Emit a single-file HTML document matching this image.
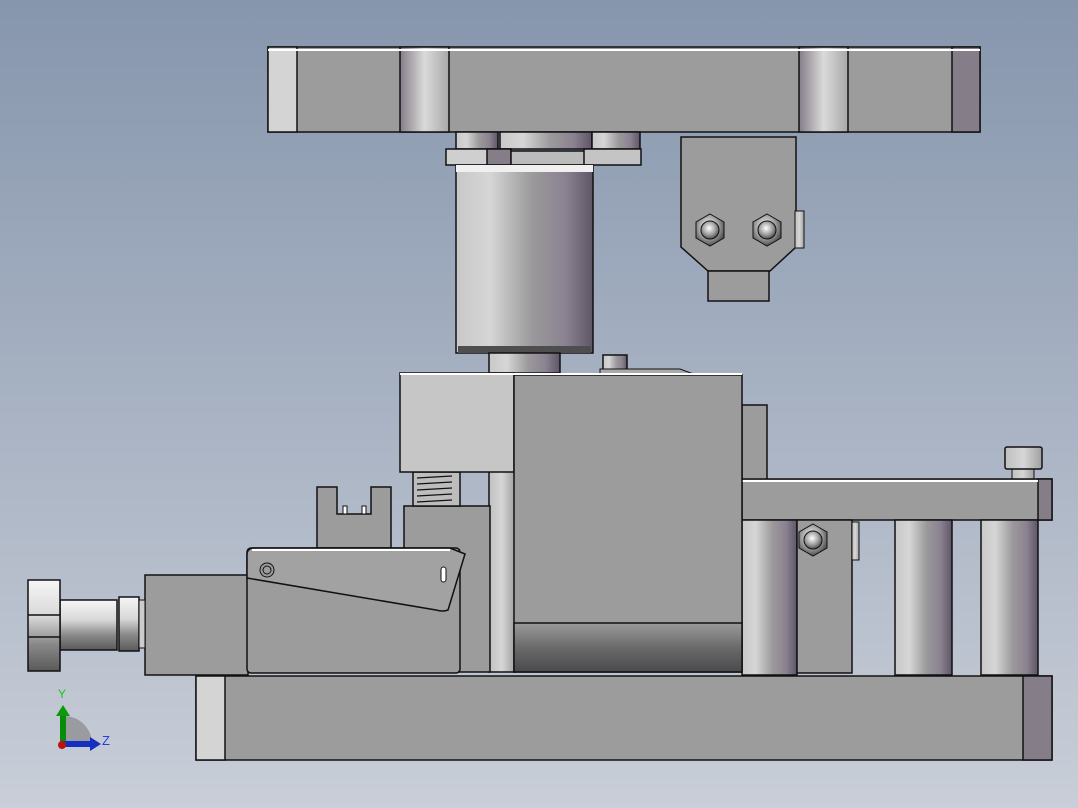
<!DOCTYPE html>
<html><head><meta charset="utf-8"><style>
html,body{margin:0;padding:0;width:1078px;height:808px;overflow:hidden}
svg{display:block}
</style></head><body>
<svg width="1078" height="808" viewBox="0 0 1078 808" xmlns="http://www.w3.org/2000/svg">
<defs>
<linearGradient id="bg" x1="0" y1="0" x2="0" y2="1"><stop offset="0" stop-color="#8696ad"/><stop offset="1" stop-color="#c9ced8"/></linearGradient>
<linearGradient id="cyl" x1="0" y1="0" x2="1" y2="0"><stop offset="0" stop-color="#c8c8c8"/><stop offset="0.25" stop-color="#d6d6d6"/><stop offset="0.55" stop-color="#9c9a9c"/><stop offset="0.8" stop-color="#8a8290"/><stop offset="1" stop-color="#5e5666"/></linearGradient>
<linearGradient id="slot" x1="0" y1="0" x2="1" y2="0"><stop offset="0" stop-color="#857d88"/><stop offset="0.5" stop-color="#dadada"/><stop offset="1" stop-color="#a8a8a8"/></linearGradient>
<linearGradient id="shaft" x1="0" y1="0" x2="0" y2="1"><stop offset="0" stop-color="#f6f6f6"/><stop offset="0.4" stop-color="#d8d8d8"/><stop offset="0.7" stop-color="#8a8a8a"/><stop offset="1" stop-color="#5a5a5a"/></linearGradient>
<linearGradient id="dark" x1="0" y1="0" x2="0" y2="1"><stop offset="0" stop-color="#9a9a9a"/><stop offset="0.5" stop-color="#6a6a6a"/><stop offset="1" stop-color="#4a4a4e"/></linearGradient>
<linearGradient id="rod" x1="0" y1="0" x2="1" y2="0"><stop offset="0" stop-color="#c0c0c0"/><stop offset="0.5" stop-color="#d6d6d6"/><stop offset="1" stop-color="#a0a0a0"/></linearGradient>
<radialGradient id="nut" cx="0.45" cy="0.4" r="0.6"><stop offset="0" stop-color="#ffffff"/><stop offset="0.6" stop-color="#a0a0a0"/><stop offset="1" stop-color="#505050"/></radialGradient>
</defs>
<rect width="1078" height="808" fill="url(#bg)"/>
<g stroke="#111" stroke-width="1.5">
<!-- top plate -->
<rect x="268" y="47" width="712" height="85" fill="#9c9c9c"/>
<rect x="268" y="47" width="29" height="85" fill="#d4d4d4"/>
<rect x="952" y="47" width="28" height="85" fill="#857d88"/>
<rect x="400" y="47" width="49" height="85" fill="url(#slot)"/>
<rect x="799" y="47" width="49" height="85" fill="url(#slot)"/>
<line x1="268" y1="50" x2="980" y2="50" stroke="#fff" stroke-width="2"/>
<!-- stubs and flange -->
<rect x="456" y="132" width="42" height="17" fill="url(#cyl)"/>
<rect x="500" y="132" width="92" height="17" fill="url(#cyl)"/>
<rect x="592" y="132" width="48" height="17" fill="url(#cyl)"/>
<rect x="446" y="149" width="65" height="16" fill="#cfcfcf"/>
<rect x="487" y="149" width="24" height="16" fill="#857d88"/>
<rect x="511" y="151" width="75" height="14" fill="#bbb"/>
<rect x="584" y="149" width="57" height="16" fill="#c4c4c4"/>
<!-- cylinder -->
<rect x="456" y="165" width="137" height="188" fill="url(#cyl)"/>
<rect x="456" y="165" width="137" height="7" fill="#f0f0f0" stroke="none"/>
<rect x="458" y="346" width="133" height="7" fill="#4e4e4e" stroke="none"/>
<rect x="489" y="353" width="71" height="20" fill="url(#cyl)"/>
<rect x="603" y="355" width="24" height="18" fill="url(#cyl)"/>
<path d="M600 373 L600 369 L680 369 L696 375" fill="#aaa" stroke-width="1"/>
<!-- bracket -->
<path d="M681 137 L796 137 L796 247 L770 271 L708 271 L681 247 Z" fill="#9c9c9c"/>
<rect x="708" y="271" width="61" height="30" fill="#9c9c9c"/>
<rect x="795" y="211" width="9" height="37" fill="url(#rod)" stroke-width="1"/>
<g fill="url(#nut)" stroke-width="1">
<polygon points="710,214 724,222 724,238 710,246 696,238 696,222"/><circle cx="710" cy="230" r="9"/>
<polygon points="767,214 781,222 781,238 767,246 753,238 753,222"/><circle cx="767" cy="230" r="9"/>
</g>
<!-- right area -->
<rect x="742" y="405" width="25" height="80" fill="#9c9c9c"/>
<rect x="1012" y="468" width="22" height="11" fill="url(#rod)" stroke-width="1"/>
<rect x="1005" y="447" width="37" height="22" rx="2" fill="url(#rod)"/>
<rect x="742" y="479" width="310" height="41" fill="#9c9c9c"/>
<rect x="1038" y="479" width="14" height="41" fill="#857d88"/>
<line x1="742" y1="481" x2="1038" y2="481" stroke="#fff" stroke-width="2"/>
<rect x="742" y="520" width="55" height="155" fill="url(#cyl)"/>
<rect x="797" y="520" width="55" height="153" fill="#9c9c9c"/>
<rect x="852" y="522" width="7" height="38" fill="url(#rod)" stroke-width="1"/>
<rect x="895" y="520" width="57" height="155" fill="url(#cyl)"/>
<rect x="981" y="520" width="57" height="155" fill="url(#cyl)"/>
<g fill="url(#nut)" stroke-width="1"><polygon points="813,524 827,532 827,548 813,556 799,548 799,532"/><circle cx="813" cy="540" r="9"/></g>
<!-- central -->
<rect x="489" y="470" width="26" height="202" fill="url(#rod)"/>
<rect x="404" y="506" width="86" height="166" fill="#9c9c9c"/>
<rect x="413" y="472" width="47" height="34" fill="#bdbdbd"/>
<g stroke-width="1.2"><line x1="417" y1="478" x2="452" y2="476"/><line x1="417" y1="484" x2="452" y2="482"/><line x1="417" y1="490" x2="452" y2="488"/><line x1="417" y1="496" x2="452" y2="494"/><line x1="417" y1="502" x2="452" y2="500"/></g>
<rect x="400" y="373" width="114" height="99" fill="#c6c6c6"/>
<rect x="514" y="375" width="228" height="297" fill="#9c9c9c"/>
<rect x="514" y="623" width="228" height="49" fill="url(#dark)"/>
<line x1="400" y1="374" x2="742" y2="374" stroke="#fff" stroke-width="2"/>
<!-- slot bracket -->
<path d="M317 487 L337 487 L337 514 L371 514 L371 487 L391 487 L391 548 L317 548 Z" fill="#9c9c9c"/>
<rect x="343" y="506" width="4" height="8" fill="#fff" stroke-width="1"/><rect x="362" y="506" width="4" height="8" fill="#fff" stroke-width="1"/>
<!-- left block and bolt -->
<rect x="145" y="575" width="103" height="100" fill="#9c9c9c"/>
<rect x="60" y="600" width="57" height="50" fill="url(#shaft)"/>
<rect x="119" y="597" width="20" height="54" fill="url(#shaft)"/>
<rect x="139" y="600" width="6" height="48" fill="#ccc" stroke-width="1"/>
<rect x="28" y="580" width="32" height="91" fill="url(#shaft)"/>
<line x1="28" y1="615" x2="60" y2="615"/><line x1="28" y1="637" x2="60" y2="637"/>
<!-- sensor box -->
<rect x="247" y="548" width="213" height="125" rx="4" fill="#9c9c9c"/>
<path d="M247 555 Q247 548 254 548 L450 548 L465 554 L448 610 Q443 612 436 610 L247 578 Z" fill="#a2a2a2"/>
<line x1="252" y1="550" x2="450" y2="550" stroke="#fff" stroke-width="2"/>
<circle cx="267" cy="570" r="7" fill="#9c9c9c" stroke-width="1"/><circle cx="267" cy="570" r="4" fill="none" stroke-width="1"/>
<rect x="441" y="567" width="5" height="15" rx="2.5" fill="#fff" stroke-width="1"/>
<!-- base plate -->
<rect x="196" y="676" width="856" height="84" fill="#9c9c9c"/>
<rect x="196" y="676" width="29" height="84" fill="#d4d4d4"/>
<rect x="1023" y="676" width="29" height="84" fill="#857d88"/>
</g>
<!-- axis triad -->
<path d="M64 716 A28 28 0 0 1 92 744 L64 744 Z" fill="#9a9ba0"/>
<rect x="60" y="714" width="6" height="32" fill="#0a8a0a"/>
<polygon points="56,716 63,705 70,716" fill="#0a9a0a"/>
<rect x="62" y="741" width="30" height="6" fill="#1530c0"/>
<polygon points="90,737 101,744 90,751" fill="#1530c0"/>
<circle cx="62" cy="745" r="4" fill="#c01010"/>
<text x="58" y="698" font-family="Liberation Sans, sans-serif" font-size="12" fill="#20c020">Y</text>
<text x="102" y="745" font-family="Liberation Sans, sans-serif" font-size="13" fill="#2040e0">Z</text>
</svg>
</body></html>
